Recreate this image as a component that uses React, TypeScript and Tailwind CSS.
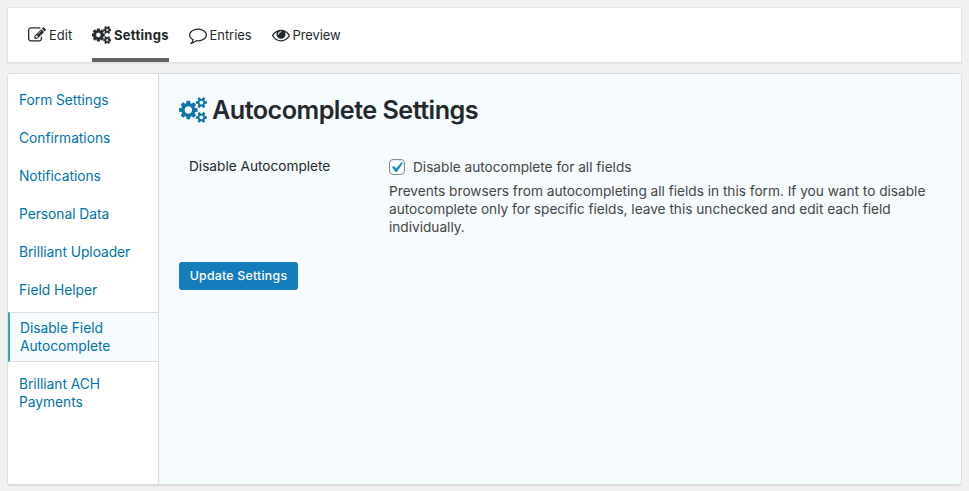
const EDIT =
  'M888 1184l116-116-152-152-116 116v56h96v96h56zm440-720q-16-16-33 1l-350 350q-17 17-1 33t33-1l350-350q17-17 1-33zm80 594v190q0 119-84.5 203.5t-203.5 84.5h-832q-119 0-203.5-84.5t-84.5-203.5v-832q0-119 84.5-203.5t203.5-84.5h832q63 0 117 25 15 7 18 23 3 17-9 29l-49 49q-14 14-32 8-23-6-45-6h-832q-66 0-113 47t-47 113v832q0 66 47 113t113 47h832q66 0 113-47t47-113v-126q0-13 9-22l64-64q15-15 35-7t20 29zm-96-738l288 288-672 672h-288v-288zm444 132l-92 92-288-288 92-92q28-28 68-28t68 28l152 152q28 28 28 68t-28 68z';
const COGS =
  'M896 896q0-106-75-181t-181-75-181 75-75 181 75 181 181 75 181-75 75-181zm768 512q0-52-38-90t-90-38-90 38-38 90q0 53 37.5 90.5t90.5 37.5 90.5-37.5 37.5-90.5zm0-1024q0-52-38-90t-90-38-90 38-38 90q0 53 37.5 90.5t90.5 37.5 90.5-37.5 37.5-90.5zm-384 421v185q0 10-7 19.5t-16 10.5l-155 24q-11 35-32 76 34 48 90 115 7 11 7 20 0 12-7 19-23 30-82.5 89.5t-78.5 59.5q-11 0-21-7l-115-90q-37 19-77 31-11 108-23 155-7 24-30 24h-186q-11 0-20-7.5t-10-17.5l-23-153q-34-10-75-31l-118 89q-7 7-20 7-11 0-21-8-144-133-144-160 0-9 7-19 10-14 41-53t47-61q-23-44-35-82l-152-24q-10-1-17-9.5t-7-19.5v-185q0-10 7-19.5t16-10.5l155-24q11-35 32-76-34-48-90-115-7-11-7-20 0-12 7-20 22-30 82-89t79-59q11 0 21 7l115 90q34-18 77-32 11-108 23-154 7-24 30-24h186q11 0 20 7.5t10 17.5l23 153q34 10 75 31l118-89q8-7 20-7 11 0 21 8 144 133 144 160 0 8-7 19-12 16-42 54t-45 60q23 48 34 82l152 23q10 2 17 10.5t7 19.5zm640 533v140q0 16-149 31-12 27-30 52 51 113 51 138 0 4-4 7-122 71-124 71-8 0-46-47t-52-68q-20 2-30 2t-30-2q-14 21-52 68t-46 47q-2 0-124-71-4-3-4-7 0-25 51-138-18-25-30-52-149-15-149-31v-140q0-16 149-31 13-29 30-52-51-113-51-138 0-4 4-7 4-2 35-20t59-34 30-16q8 0 46 46.5t52 67.5q20-2 30-2t30 2q51-71 92-112l6-2q4 0 124 70 4 3 4 7 0 25-51 138 17 23 30 52 149 15 149 31zm0-1024v140q0 16-149 31-12 27-30 52 51 113 51 138 0 4-4 7-122 71-124 71-8 0-46-47t-52-68q-20 2-30 2t-30-2q-14 21-52 68t-46 47q-2 0-124-71-4-3-4-7 0-25 51-138-18-25-30-52-149-15-149-31v-140q0-16 149-31 13-29 30-52-51-113-51-138 0-4 4-7 4-2 35-20t59-34 30-16q8 0 46 46.5t52 67.5q20-2 30-2t30 2q51-71 92-112l6-2q4 0 124 70 4 3 4 7 0 25-51 138 17 23 30 52 149 15 149 31z';
const COMMENT =
  'M896 384q-204 0-381.5 69.5t-282 187.5-104.5 255q0 112 71.5 213.5t201.5 175.5l87 50-27 96q-24 91-70 172 152-63 275-171l43-38 57 6q69 8 130 8 204 0 381.5-69.5t282-187.5 104.5-255-104.5-255-282-187.5-381.5-69.5zm896 512q0 174-120 321.5t-326 233-450 85.5q-70 0-145-8-198 175-460 242-49 14-114 22h-5q-15 0-27-10.5t-16-27.5v-1q-3-4-.5-12t2-10 4.5-9.5l6-9 7-8.5 8-9q7-8 31-34.5t34.5-38 31-39.5 32.5-51 27-59 26-76q-157-89-247.5-220t-90.5-281q0-174 120-321.5t326-233 450-85.5 450 85.5 326 233 120 321.5z';
const EYE =
  'M1664 960q-152-236-381-353 61 104 61 225 0 185-131.5 316.5t-316.5 131.5-316.5-131.5-131.5-316.5q0-121 61-225-229 117-381 353 133 205 333.5 326.5t434.5 121.5 434.5-121.5 333.5-326.5zm-720-384q0-20-14-34t-34-14q-125 0-214.5 89.5t-89.5 214.5q0 20 14 34t34 14 34-14 14-34q0-86 61-147t147-61q20 0 34-14t14-34zm848 384q0 34-20 69-140 230-376.5 368.5t-499.5 138.5-499.5-139-376.5-368q-20-35-20-69t20-69q140-229 376.5-368t499.5-139 499.5 139 376.5 368q20 35 20 69z';

function Icon({ d, wide = false, className }: { d: string; wide?: boolean; className: string }) {
  return (
    <svg viewBox={wide ? '0 0 1920 1792' : '0 0 1792 1792'} fill="currentColor" className={`shrink-0 ${className}`} aria-hidden="true">
      <path d={d} />
    </svg>
  );
}

const tabs = [
  { label: 'Edit', d: EDIT, item: 'w-11', text: '' },
  { label: 'Settings', d: COGS, wide: true, active: true, item: 'w-[76.5px]', text: 'tracking-[0.3px]' },
  { label: 'Entries', d: COMMENT, item: 'w-[63px]', text: 'tracking-[-0.05px]' },
  { label: 'Preview', d: EYE, item: 'w-[68px]', text: 'tracking-[-0.1px]' },
];

const links = ['Form Settings', 'Confirmations', 'Notifications', 'Personal Data', 'Brilliant Uploader', 'Field Helper'];

export default function App() {
  return (
    <div className="flex h-[491px] w-[969px] flex-col gap-[10px] overflow-hidden bg-[#f0f0f0] px-[7px] pt-[7px] font-['Inter','Liberation_Sans',sans-serif] text-[#23282d]">
      <nav className="flex h-[56px] w-[955px] shrink-0 gap-5 border border-[#e2e2e2] bg-white pl-5 shadow-[0_1px_1px_rgba(0,0,0,0.04)]">
        {tabs.map((t) => (
          <a
            key={t.label}
            className={`flex h-[54px] items-center gap-[3px] whitespace-nowrap border-b-4 pt-1 text-[13px] leading-5 ${t.item} ${
              t.active ? 'border-[#646464] font-bold' : 'border-transparent'
            }`}
          >
            <Icon
              d={t.d}
              wide={t.wide}
              className={t.wide ? 'h-[18px] w-[19px] stroke-current stroke-[50]' : 'h-[18px] w-[18px]'}
            />
            <span className={t.text}>{t.label}</span>
          </a>
        ))}
      </nav>

      <div className="flex h-[412px] w-[955px] shrink-0 overflow-hidden rounded-[3px] border border-[#dcdcde] bg-white shadow-[0_1px_0_#dcdcdc]">
        <aside className="flex w-[151px] shrink-0 flex-col border-r border-[#dcdcde] pt-[7px] text-[13.8px] leading-[18px] tracking-[-0.04px] text-[#0073aa]">
          {links.map((l) => (
            <a key={l} className="whitespace-nowrap px-[11px] py-[10px]">
              {l}
            </a>
          ))}
          <a className="mt-[3px] border-y border-l-2 border-y-[#dcdcde] border-l-[#2ea2cc] bg-[#f6fbfd] py-[6px] pl-[10px]">
            Disable Field
            <br />
            Autocomplete
          </a>
          <a className="mt-[3px] px-[11px] py-[10px]">
            Brilliant ACH
            <br />
            Payments
          </a>
        </aside>

        <main className="flex-1 bg-[#f6fbfd] pl-5 pt-5">
          <h1 className="flex h-8 items-center gap-[5px] whitespace-nowrap text-[25.2px] font-semibold leading-8 tracking-[-0.54px]">
            <Icon d={COGS} wide className="h-[26px] w-[28px] text-[#0e76a8]" />
            Autocomplete Settings
          </h1>

          <div className="mt-[31px] flex text-[13.7px] tracking-[-0.02px]">
            <div className="w-[200px] whitespace-nowrap pl-[10px] leading-[18px]">Disable Autocomplete</div>
            <div className="w-[550px] pl-[10px] text-[#444]">
              <label className="flex h-5 items-center gap-2 whitespace-nowrap">
                <span className="flex h-4 w-4 items-center justify-center rounded-[4px] border border-[#7e8993] bg-white shadow-[inset_0_1px_2px_rgba(0,0,0,0.1)]">
                  <svg viewBox="0 0 20 20" className="mr-[2px] h-[21px] w-[21px] shrink-0" aria-hidden="true">
                    <path d="M14.83 4.89l1.34.94-5.81 8.38H9.02L5.78 9.67l1.34-1.25 2.57 2.4z" fill="#1e8cbe" />
                  </svg>
                </span>
                Disable autocomplete for all fields
              </label>
              <p className="mt-[5px] whitespace-nowrap leading-[18px]">
                Prevents browsers from autocompleting all fields in this form. If you want to disable
                <br />
                autocomplete only for specific fields, leave this unchecked and edit each field
                <br />
                individually.
              </p>
            </div>
          </div>

          <button className="mt-[26px] flex h-7 w-[119px] items-center justify-center whitespace-nowrap rounded-[3px] bg-[#147dbb] pt-px text-[12.3px] font-medium tracking-[0.25px] text-white">
            Update Settings
          </button>
        </main>
      </div>
    </div>
  );
}
